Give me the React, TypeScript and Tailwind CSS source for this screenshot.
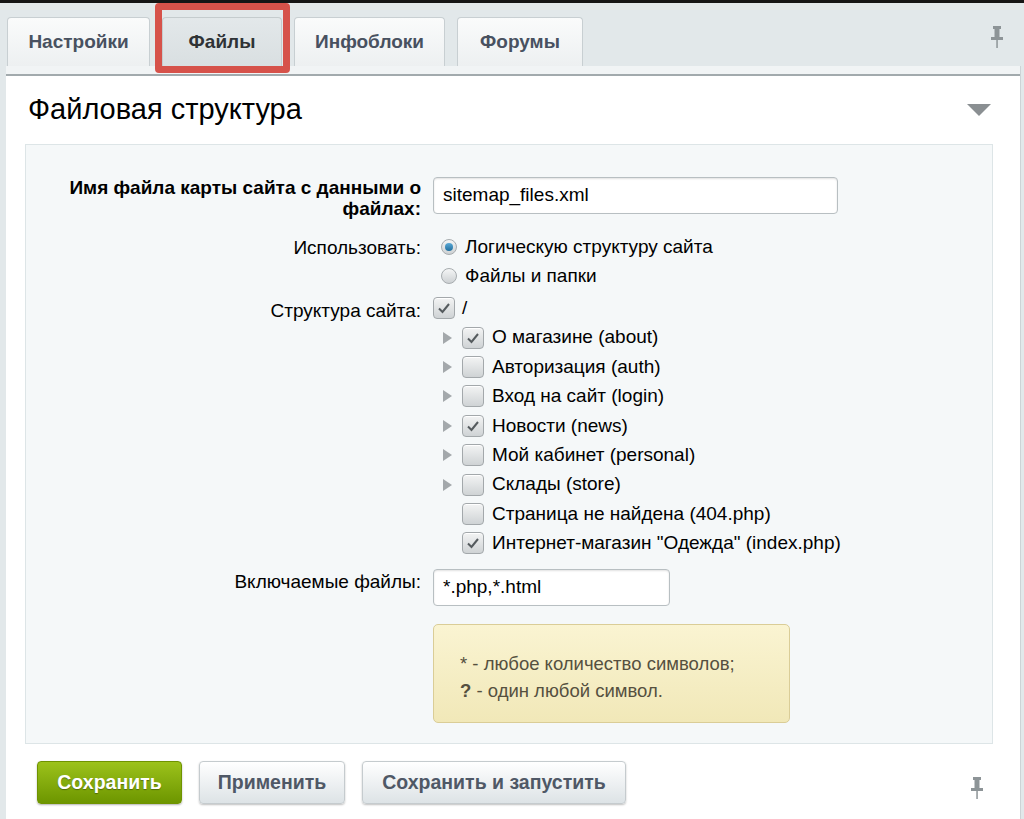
import React from 'react'

const font = { fontFamily: '"Liberation Sans", Arial, sans-serif' }

function Pin({ className }: { className?: string }) {
  return (
    <svg width="14" height="22" viewBox="0 0 14 22" className={className} fill="#8d9497">
      <rect x="3" y="0" width="8" height="3" />
      <rect x="4.5" y="3" width="5" height="8" />
      <rect x="1" y="11" width="12" height="3" />
      <rect x="6.3" y="14" width="1.5" height="8" />
    </svg>
  )
}

function Checkbox({ checked }: { checked?: boolean }) {
  return (
    <span className="flex h-[22px] w-[22px] shrink-0 items-center justify-center rounded-[4px] border border-[#a3a8ab] bg-gradient-to-b from-[#f3f4f4] to-[#cfd3d5] shadow-[inset_0_1px_0_#fff]">
      {checked && (
        <svg width="14" height="12" viewBox="0 0 14 12">
          <path d="M2 6.5 L5.5 10 L12 2" fill="none" stroke="#555b5e" strokeWidth="2" />
        </svg>
      )}
    </span>
  )
}

function Radio({ checked }: { checked?: boolean }) {
  return (
    <span className="flex h-[16px] w-[16px] shrink-0 items-center justify-center rounded-full border border-[#a7acaf] bg-gradient-to-b from-[#f5f6f6] to-[#cdd1d3]">
      {checked && <span className="h-[8px] w-[8px] rounded-full bg-gradient-to-b from-[#5aa9d6] to-[#1f6f9e]" />}
    </span>
  )
}

function Arrow() {
  return (
    <svg width="9" height="12" viewBox="0 0 9 12" className="shrink-0">
      <path d="M0 0 L9 6 L0 12 Z" fill="#a3a8ab" />
    </svg>
  )
}

const tree = [
  { label: 'О магазине (about)', checked: true, arrow: true },
  { label: 'Авторизация (auth)', checked: false, arrow: true },
  { label: 'Вход на сайт (login)', checked: false, arrow: true },
  { label: 'Новости (news)', checked: true, arrow: true },
  { label: 'Мой кабинет (personal)', checked: false, arrow: true },
  { label: 'Склады (store)', checked: false, arrow: true },
  { label: 'Страница не найдена (404.php)', checked: false, arrow: false },
  { label: 'Интернет-магазин "Одежда" (index.php)', checked: true, arrow: false },
]

const tabs = [
  { label: 'Настройки', w: 'w-[143px]' },
  { label: 'Файлы', w: 'w-[120px]' },
  { label: 'Инфоблоки', w: 'w-[151px]' },
  { label: 'Форумы', w: 'w-[126px]' },
]

export default function App() {
  return (
    <div style={font} className="relative h-[819px] w-[1024px] overflow-hidden bg-[#e2e8ea] text-[19px] text-black">
      <div className="h-[3px] bg-[#151515]" />

      {/* tabs */}
      <div className="flex h-[63px] items-end gap-[12px] pl-[7px] pr-[20px]">
        {tabs.map((t, i) => (
          <div
            key={t.label}
            className={
              i === 1
                ? `flex h-[49px] ${t.w} items-center justify-center rounded-t-[4px] border border-b-0 border-[#c5ccce] bg-gradient-to-b from-[#e3e8ea] to-[#d9dfe1] text-[19px] font-bold text-[#2f3336]`
                : `flex h-[49px] ${t.w} items-center justify-center rounded-t-[4px] border border-b-0 border-[#c8cfd2] bg-gradient-to-b from-[#fafbfb] to-[#edf0f1] text-[19px] font-bold text-[#485160]`
            }
          >
            {t.label}
          </div>
        ))}
        <div className="flex-1" />
        <Pin className="mb-[18px]" />
      </div>

      {/* highlight annotation */}
      <div className="absolute left-[155px] top-[3px] h-[70px] w-[135px] rounded-[4px] border-[7px] border-[#d6524a]" />

      {/* panel */}
      <div className="ml-[6px] mr-[3px] border-r border-[#cdd3d6]">
        <div className="h-[8px] bg-[#f1f4f5]" />
        <div className="h-[749px] border-t-2 border-[#a2aaad] bg-white pl-[19px] pr-[27px]">
          <div className="flex h-[68px] items-center justify-between pl-[3px] pr-[2px]">
            <h2 className="text-[29px] font-normal text-black">Файловая структура</h2>
            <svg width="24" height="12" viewBox="0 0 24 12">
              <path d="M0 0 L24 0 L12 12 Z" fill="#8a8f92" />
            </svg>
          </div>

          <div className="border border-[#dde5e7] bg-[#f5f8f9] pb-[20px] pt-[32px]">
            <div className="grid grid-cols-[395px_1fr] gap-x-[12px]">
              {/* row 1 */}
              <div className="h-[37px] text-right font-bold leading-[21px]">
                Имя файла карты сайта с данными о
                <br />
                файлах:
              </div>
              <div>
                <div className="flex h-[37px] w-[405px] items-center rounded-[4px] border border-[#b8bfc2] bg-white px-[9px] shadow-[inset_0_1px_2px_rgba(0,0,0,0.12)]">
                  sitemap_files.xml
                </div>
              </div>

              {/* row 2 */}
              <div className="mt-[18.5px] text-right leading-[29px]">Использовать:</div>
              <div className="mt-[18.5px]">
                <div className="flex h-[29px] items-center gap-[8px] pl-[8px]">
                  <Radio checked />
                  <span>Логическую структуру сайта</span>
                </div>
                <div className="flex h-[29px] items-center gap-[8px] pl-[8px]">
                  <Radio />
                  <span>Файлы и папки</span>
                </div>
              </div>

              {/* row 3 */}
              <div className="mt-[3px] text-right leading-[34px]">Структура сайта:</div>
              <div className="mt-[3px]">
                <div className="flex h-[29.4px] items-center gap-[7px]">
                  <Checkbox checked />
                  <span>/</span>
                </div>
                {tree.map((n) => (
                  <div key={n.label} className="flex h-[29.4px] items-center pl-[10px]">
                    <span className="flex w-[19px] shrink-0">{n.arrow && <Arrow />}</span>
                    <Checkbox checked={n.checked} />
                    <span className="ml-[8px]">{n.label}</span>
                  </div>
                ))}
              </div>

              {/* row 4 */}
              <div className="mt-[11px] text-right leading-[26px]">Включаемые файлы:</div>
              <div className="mt-[11px]">
                <div className="flex h-[37px] w-[237px] items-center rounded-[4px] border border-[#b8bfc2] bg-white px-[9px] shadow-[inset_0_1px_2px_rgba(0,0,0,0.12)]">
                  *.php,*.html
                </div>
                <div className="mt-[18px] h-[99px] w-[357px] rounded-[5px] border border-[#dacd97] bg-gradient-to-b from-[#faf4d2] to-[#f1e8b8] pl-[26px] pt-[25px] text-[18.5px] leading-[27px] text-[#55503f]">
                  <div>* - любое количество символов;</div>
                  <div>
                    <span className="font-bold">?</span> - один любой символ.
                  </div>
                </div>
              </div>
            </div>
          </div>

          {/* buttons */}
          <div className="mt-[17px] flex items-center gap-[17px] pl-[12px]">
            <button className="h-[43px] w-[145px] rounded-[4px] border border-[#6f9300] bg-gradient-to-b from-[#9cc21a] to-[#6d9600] text-[19.5px] font-bold text-white shadow-[0_1px_2px_rgba(0,0,0,0.3)] [text-shadow:0_1px_1px_rgba(0,0,0,0.35)]">
              Сохранить
            </button>
            <button className="h-[43px] w-[146px] rounded-[4px] border border-[#c5cbce] bg-gradient-to-b from-[#ffffff] to-[#dde3e6] text-[19.5px] font-bold text-[#4f5866] shadow-[0_1px_2px_rgba(0,0,0,0.25)]">
              Применить
            </button>
            <button className="h-[43px] w-[264px] rounded-[4px] border border-[#c5cbce] bg-gradient-to-b from-[#ffffff] to-[#dde3e6] text-[19.5px] font-bold text-[#4f5866] shadow-[0_1px_2px_rgba(0,0,0,0.25)]">
              Сохранить и запустить
            </button>
            <div className="flex-1" />
            <Pin className="mr-[9px] mt-[10px]" />
          </div>
        </div>
      </div>
    </div>
  )
}
